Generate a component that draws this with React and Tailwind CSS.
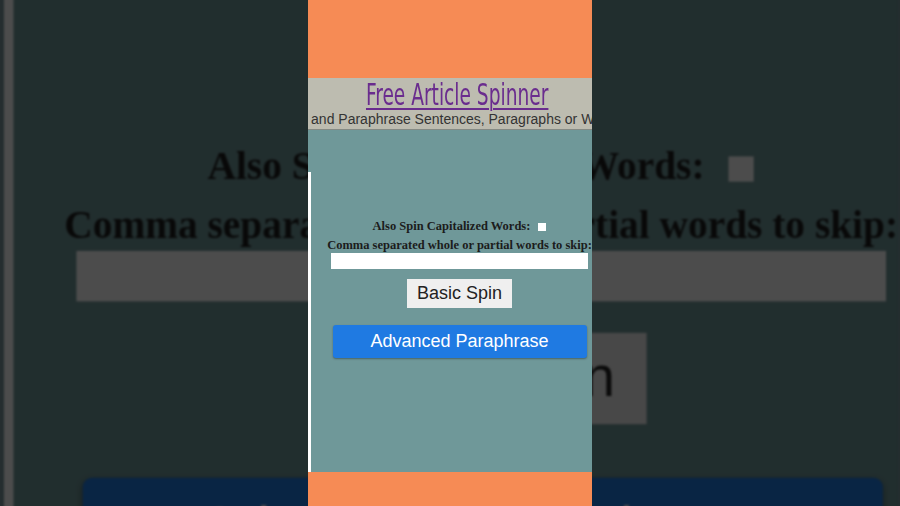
import React from 'react';

// one phone-sized page; the backdrop is the same page blown up and dimmed
const Panel = () => {
    return (
        <div className="w-[284px] h-[506px] shrink-0 flex flex-col bg-[#6f9899] font-['Liberation_Sans',Arial,sans-serif]">
            <div className="h-[78px] bg-[#f68b55]" />

            {/* header */}
            <header className="h-[52px] bg-[#bdbcb0] border-b border-[#858a84] flex flex-col items-center overflow-hidden">
                <a className="block mt-[4px] ml-[15px] h-[29px] text-[#6a2c8e] whitespace-nowrap">
                    <span className="inline-block origin-center scale-x-[0.69] text-[30px] leading-[26px] underline decoration-[2px] underline-offset-[3px] font-['DejaVu_Sans_Condensed','DejaVu_Sans',sans-serif]">
                        Free Article Spinner
                    </span>
                </a>
                <p className="whitespace-nowrap text-[14px] leading-[16px] text-[#333]">
                    Spin and Paraphrase Sentences, Paragraphs or Whole
                </p>
            </header>

            <div className="h-[42px]" />

            {/* form */}
            <div className="flex-1 border-l-[3px] border-white flex flex-col items-center pl-[16px]">
                <div className="mt-[47px] flex items-center gap-[8px] h-[15px]">
                    <span className="text-[12.5px] leading-[15px] font-bold text-[#1c1c1c] font-['Liberation_Serif',serif]">
                        Also Spin Capitalized Words:
                    </span>
                    <span className="w-[8px] h-[8px] bg-white" />
                </div>
                <p className="mt-[4px] whitespace-nowrap text-[12.5px] leading-[15px] font-bold text-[#1c1c1c] font-['Liberation_Serif',serif]">
                    Comma separated whole or partial words to skip:
                </p>
                <div className="w-[257px] h-[16px] bg-white" />
                <button className="mt-[10px] w-[105px] h-[29px] bg-[#efefef] text-[18px] text-[#222]">
                    Basic Spin
                </button>
                <button className="mt-[17px] w-[254px] h-[33px] rounded-[3px] bg-[#1f7ae2] text-[18px] text-white shadow-[0_1px_2px_rgba(0,0,0,0.35)]">
                    Advanced Paraphrase
                </button>
            </div>

            <div className="h-[34px] bg-[#f68b55]" />
        </div>
    );
};

const App = () => {
    return (
        <div className="relative w-[900px] h-[506px] overflow-hidden bg-[#252d2f] flex justify-center">
            {/* blurred, darkened backdrop */}
            <div className="absolute inset-0 overflow-hidden">
                <div className="absolute left-[4px] top-[-546px] origin-top-left scale-[3.15] brightness-[0.3] blur-[0.4px]">
                    <Panel />
                </div>
            </div>

            {/* foreground */}
            <div className="relative">
                <Panel />
            </div>
        </div>
    );
};

export default App;
